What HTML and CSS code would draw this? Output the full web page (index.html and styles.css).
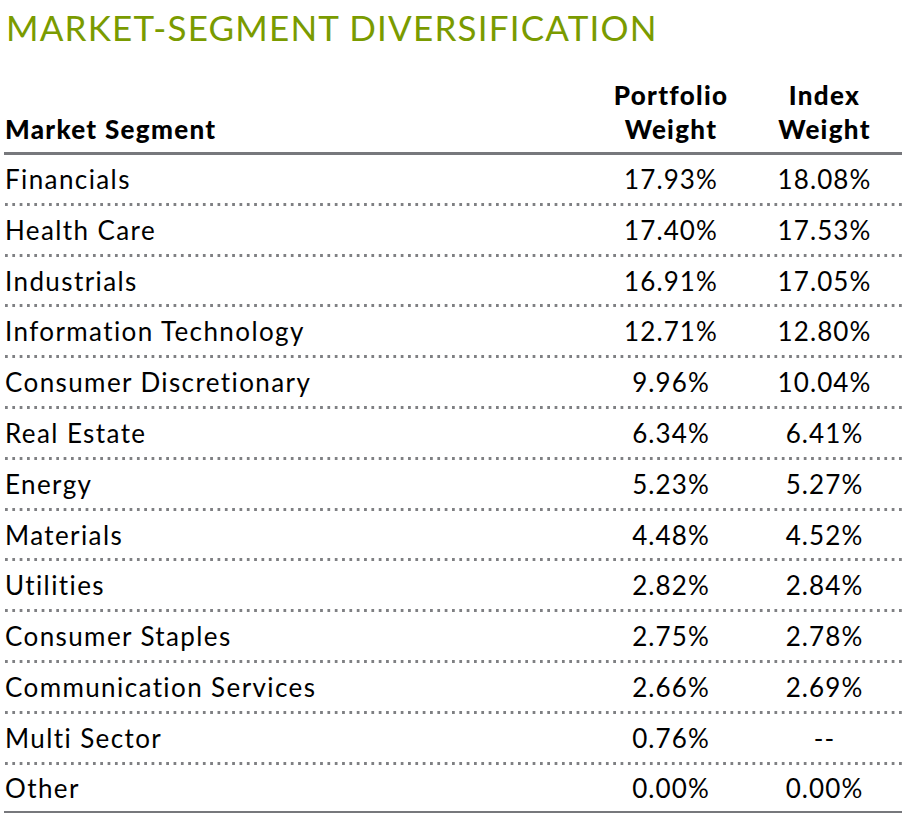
FILE: index.html
```html
<!DOCTYPE html>
<html>
<head>
<meta charset="utf-8">
<link rel="stylesheet" href="styles.css">
</head>
<body>
<div class="wrap">
  <h1 class="title">MARKET-SEGMENT DIVERSIFICATION</h1>
  <div class="table">
    <div class="row head">
      <div class="c1">Market Segment</div>
      <div class="c2">Portfolio<br>Weight</div>
      <div class="c3">Index<br>Weight</div>
    </div>
    <div class="row"><div class="c1">Financials</div><div class="c2">17.93%</div><div class="c3">18.08%</div></div>
    <div class="row"><div class="c1">Health Care</div><div class="c2">17.40%</div><div class="c3">17.53%</div></div>
    <div class="row"><div class="c1">Industrials</div><div class="c2">16.91%</div><div class="c3">17.05%</div></div>
    <div class="row"><div class="c1">Information Technology</div><div class="c2">12.71%</div><div class="c3">12.80%</div></div>
    <div class="row"><div class="c1">Consumer Discretionary</div><div class="c2">9.96%</div><div class="c3">10.04%</div></div>
    <div class="row"><div class="c1">Real Estate</div><div class="c2">6.34%</div><div class="c3">6.41%</div></div>
    <div class="row"><div class="c1">Energy</div><div class="c2">5.23%</div><div class="c3">5.27%</div></div>
    <div class="row"><div class="c1">Materials</div><div class="c2">4.48%</div><div class="c3">4.52%</div></div>
    <div class="row"><div class="c1">Utilities</div><div class="c2">2.82%</div><div class="c3">2.84%</div></div>
    <div class="row"><div class="c1">Consumer Staples</div><div class="c2">2.75%</div><div class="c3">2.78%</div></div>
    <div class="row"><div class="c1">Communication Services</div><div class="c2">2.66%</div><div class="c3">2.69%</div></div>
    <div class="row"><div class="c1">Multi Sector</div><div class="c2">0.76%</div><div class="c3">--</div></div>
    <div class="row last"><div class="c1">Other</div><div class="c2">0.00%</div><div class="c3">0.00%</div></div>
  </div>
</div>
</body>
</html>
```
FILE: styles.css
```css
html, body {
  margin: 0;
  padding: 0;
  background: #ffffff;
}
body {
  font-family: "Lato", "Liberation Sans", sans-serif;
  color: #000;
  font-variant-ligatures: none;
}
.wrap {
  width: 898px;
  padding-left: 4px;
}
.title {
  margin: 6px 0 0 0;
  padding-left: 2px;
  font-size: 35px;
  line-height: 42px;
  font-weight: 400;
  color: #7a9b00;
  letter-spacing: 1.2px;
}
.table {
  margin-top: 30px;
}
.row {
  display: grid;
  grid-template-columns: 591px 152px 155px;
  font-size: 26px;
  line-height: 46.8px;
  letter-spacing: 1.1px;
  padding-top: 1px;
  padding-bottom: 3px;
  background-image: linear-gradient(to right, #7f8083 0, #7f8083 3px, transparent 3px);
  background-size: 7.33px 3px;
  background-repeat: repeat-x;
  background-position: 1px 100%;
}
.row .c1 {
  padding-left: 1px;
  letter-spacing: 1.4px;
}
.row .c2,
.row .c3 {
  text-align: center;
}
.row.head {
  font-size: 26px;
  font-weight: 900;
  line-height: 34px;
  letter-spacing: 1.3px;
  padding-top: 0;
  padding-bottom: 6px;
  align-items: end;
  background: none;
  border-bottom: 3px solid #77787c;
}
.row.head .c1 {
  letter-spacing: 1.3px;
}
.row.last {
  background: none;
  padding-bottom: 0;
  line-height: 45.5px;
  border-bottom: 2px solid #77787c;
}
```
